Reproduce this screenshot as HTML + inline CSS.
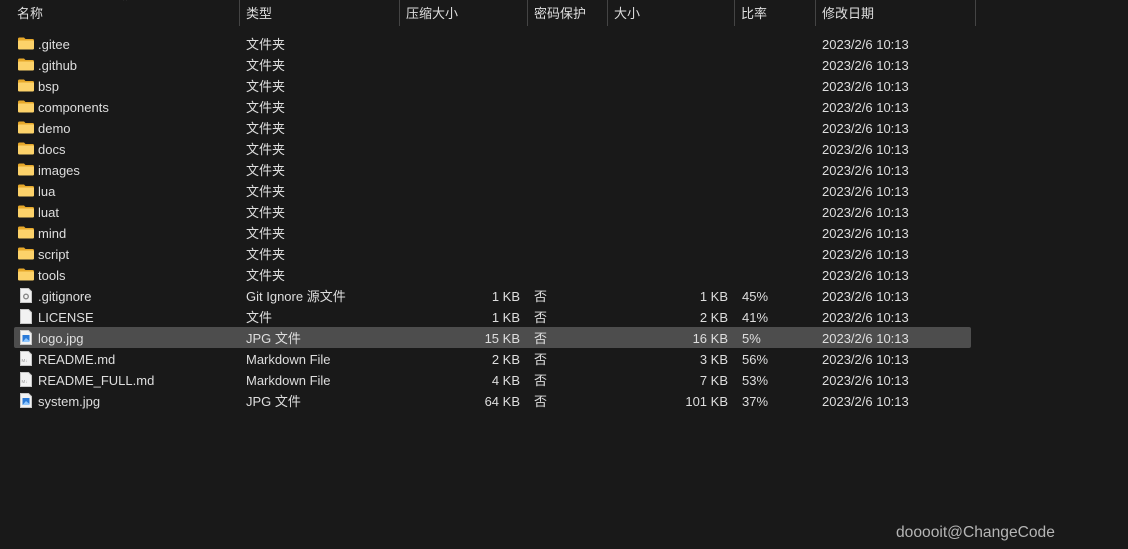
<!DOCTYPE html>
<html><head><meta charset="utf-8"><style>
body{margin:0;width:1128px;height:549px;background:#191919;overflow:hidden;font-family:"Liberation Sans","Noto Sans CJK SC",sans-serif;font-size:13px;color:#dedede;position:relative}
.h{position:absolute;top:4px;line-height:20px}
.d{position:absolute;top:0;width:1px;height:26px;background:#444}
.r{position:absolute;left:14px;width:957px;height:21px}
.r span{position:absolute;top:1px;line-height:21px;white-space:nowrap}
.r.sel{background:#4d4d4d;border-radius:2px}
.fo{position:absolute;left:4px;top:4px;width:16px;height:13px}
.fi{position:absolute;left:6px;top:3px;width:12px;height:15px}
.rt{text-align:right}
</style></head><body>
<div class="h" style="left:17px">名称</div>
<div style="position:absolute;left:121px;top:-3px;color:#bbb;font-size:10px">⌃</div>
<div class="h" style="left:246px">类型</div>
<div class="h" style="left:406px">压缩大小</div>
<div class="h" style="left:534px">密码保护</div>
<div class="h" style="left:614px">大小</div>
<div class="h" style="left:741px">比率</div>
<div class="h" style="left:822px">修改日期</div>
<div class="d" style="left:239px"></div><div class="d" style="left:399px"></div><div class="d" style="left:527px"></div><div class="d" style="left:607px"></div><div class="d" style="left:734px"></div><div class="d" style="left:815px"></div><div class="d" style="left:975px"></div>

<svg width="0" height="0" style="position:absolute"><defs>
<symbol id="fold" viewBox="0 0 16 12"><path d="M0 1.5Q0 0 1.5 0H6l1.5 1.5H14.5Q16 1.5 16 3V10.5Q16 12 14.5 12H1.5Q0 12 0 10.5Z" fill="#e6a82a"/><path d="M0 4Q0 3 1 3H15Q16 3 16 4V10.5Q16 12 14.5 12H1.5Q0 12 0 10.5Z" fill="#fcd26a"/></symbol>
<symbol id="file" viewBox="0 0 12 15"><path d="M0.5 0.5H8.5L11.5 3.5V14.5H0.5Z" fill="#f2f2f2" stroke="#c8c8c8"/></symbol>
</defs></svg>

<div id="rows"></div>
<div style="position:absolute;left:896px;top:524px;font-size:15.6px;color:#b5b5b5">dooooit@ChangeCode</div>
<script>
var f=[".gitee",".github","bsp","components","demo","docs","images","lua","luat","mind","script","tools"];
var h="";
f.forEach(function(n,i){h+='<div class="r" style="top:'+(33+i*21)+'px"><svg class="fo"><use href="#fold"/></svg><span style="left:24px">'+n+'</span><span style="left:232px">文件夹</span><span style="left:808px">2023/2/6 10:13</span></div>';});
var g=[[".gitignore","Git Ignore 源文件","1 KB","1 KB","45%","g"],["LICENSE","文件","1 KB","2 KB","41%","f"],["logo.jpg","JPG 文件","15 KB","16 KB","5%","j"],["README.md","Markdown File","2 KB","3 KB","56%","m"],["README_FULL.md","Markdown File","4 KB","7 KB","53%","m"],["system.jpg","JPG 文件","64 KB","101 KB","37%","j"]];
g.forEach(function(a,i){var ic='<svg class="fi"><use href="#file"/>';
if(a[5]=="g")ic+='<circle cx="6" cy="8.5" r="2.3" fill="none" stroke="#888" stroke-width="1.4"/>';
if(a[5]=="j")ic+='<rect x="2.5" y="5" width="7" height="7" fill="#2a7ad8"/><path d="M2.5 12L6 8L9.5 11V12Z" fill="#8fc7ff"/>';
if(a[5]=="m")ic+='<text x="1.5" y="11" font-size="4.5" fill="#999" font-family="Liberation Sans">M↓</text>';
ic+='</svg>';
h+='<div class="r'+(i==2?' sel':'')+'" style="top:'+(285+i*21)+'px">'+ic+'<span style="left:24px">'+a[0]+'</span><span style="left:232px">'+a[1]+'</span><span class="rt" style="right:451px">'+a[2]+'</span><span style="left:520px">否</span><span class="rt" style="right:243px">'+a[3]+'</span><span style="left:728px">'+a[4]+'</span><span style="left:808px">2023/2/6 10:13</span></div>';});
document.getElementById("rows").innerHTML=h;
</script>
</body></html>
